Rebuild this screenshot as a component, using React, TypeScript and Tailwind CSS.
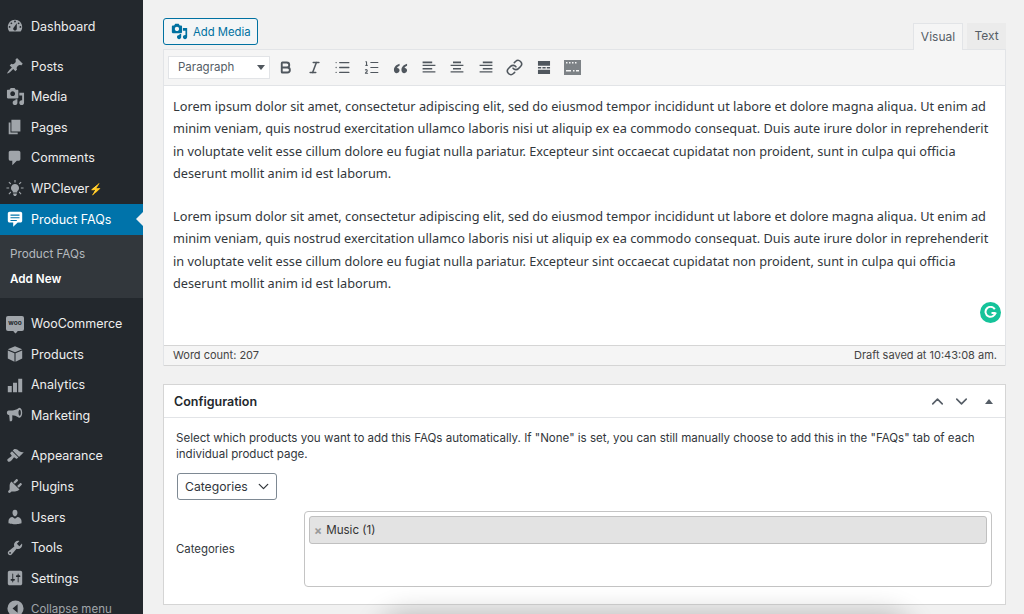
import React from "react";
import { Bold, Italic, List, ListOrdered, Link, ChevronUp, ChevronDown } from "lucide-react";

const P = ({ d, size = 20, className = "" }: { d: string; size?: number; className?: string }) => (
  <svg width={size} height={size} viewBox="0 0 20 20" fill="currentColor" fillRule="evenodd" className={className}>
    <path d={d} />
  </svg>
);

const paths = {
  dashboard: "M3.76 16h12.48c1.1-1.37 1.76-3.11 1.76-5 0-4.42-3.58-8-8-8s-8 3.58-8 8c0 1.89.66 3.63 1.76 5zM10 4c.55 0 1 .45 1 1s-.45 1-1 1-1-.45-1-1 .45-1 1-1zM6 6c.55 0 1 .45 1 1s-.45 1-1 1-1-.45-1-1 .45-1 1-1zm8 0c.55 0 1 .45 1 1s-.45 1-1 1-1-.45-1-1 .45-1 1-1zm-5.37 5.55L12 7v6c0 1.1-.9 2-2 2s-2-.9-2-2c0-.57.24-1.08.63-1.45zM4 10c.55 0 1 .45 1 1s-.45 1-1 1-1-.45-1-1 .45-1 1-1zm12 0c.55 0 1 .45 1 1s-.45 1-1 1-1-.45-1-1 .45-1 1-1z",
  post: "M10.44 3.02l1.82-1.82 6.36 6.35-1.83 1.82c-1.05-.68-2.48-.57-3.41.36l-.75.75c-.92.93-1.04 2.35-.35 3.41l-1.83 1.82-2.41-2.41-2.8 2.79c-.42.42-3.38 2.71-3.8 2.29s1.86-3.39 2.28-3.81l2.79-2.79L4.1 9.36l1.83-1.82c1.05.69 2.48.57 3.4-.36l.75-.75c.93-.92 1.05-2.35.36-3.41z",
  media: "M13 11V4c0-.55-.45-1-1-1h-1.67L9 1H5L3.67 3H2c-.55 0-1 .45-1 1v7c0 .55.45 1 1 1h10c.55 0 1-.45 1-1zM7 4.5c1.38 0 2.5 1.12 2.5 2.5S8.38 9.5 7 9.5 4.5 8.38 4.5 7 5.62 4.5 7 4.5zM14 6h5v10.5c0 1.38-1.12 2.5-2.5 2.5S14 17.88 14 16.5s1.12-2.5 2.5-2.5c.17 0 .34.02.5.05V9h-3V6zm-4 8.05V13h2v3.5c0 1.38-1.12 2.5-2.5 2.5S7 17.88 7 16.5 8.12 14 9.5 14c.17 0 .34.02.5.05z",
  page: "M6 15V2h10v13H6zm-1 1h8v2H3V5h2v11z",
  comments: "M5 2h9c1.1 0 2 .9 2 2v7c0 1.1-.9 2-2 2h-2l-5 5v-5H5c-1.1 0-2-.9-2-2V4c0-1.1.9-2 2-2z",
  faq: "M4 2h12c1.1 0 2 .9 2 2v8c0 1.1-.9 2-2 2h-3l-5 4.500V14H4c-1.1 0-2-.9-2-2V4c0-1.1.9-2 2-2zm1 3v1.300h10V5H5zm0 3v1.300h10V8H5zm0 3v1.300h7V11H5z",
  appearance: "M14.48 11.06L7.41 3.99l1.5-1.5c.5-.56 2.3-.47 3.51.32 1.21.8 1.43 1.28 2.91 2.1 1.18.64 2.45 1.26 4.45.85zm-.71.71L6.7 4.7 4.93 6.47c-.39.39-.39 1.02 0 1.41l1.06 1.06c.39.39.39 1.03 0 1.42-.6.6-1.43 1.11-2.21 1.69-.35.26-.7.53-1.01.84C1.43 13.23.99 14.8 2 15.82c1.02 1.02 2.59.58 3.94-.77.31-.31.58-.66.84-1.01.58-.78 1.09-1.61 1.69-2.21.39-.39 1.03-.39 1.42 0l1.06 1.06c.39.39 1.02.39 1.41 0z",
  plugins: "M13.11 4.36L9.87 7.6 8 5.73l3.24-3.24c.35-.34 1.05-.2 1.56.32.52.51.66 1.21.31 1.55zm-8 1.77l.91-1.12 9.01 9.01-1.19.84c-.71.71-2.63 1.16-3.82 1.16H6.14L4.9 17.26c-.59.59-1.54.59-2.12 0-.59-.58-.59-1.53 0-2.12l1.24-1.24v-3.88c0-1.13.4-3.19 1.09-3.89zm7.26 3.97l3.24-3.24c.34-.35 1.04-.21 1.55.31.52.51.66 1.21.31 1.55l-3.24 3.25z",
  users: "M10 9.25c-2.27 0-2.73-3.44-2.73-3.44C7 4.02 7.82 2 9.97 2c2.16 0 2.98 2.02 2.71 3.81 0 0-.41 3.44-2.68 3.44zm0 2.57L12.72 10c2.39 0 4.52 2.33 4.52 4.53v2.49s-3.65 1.13-7.24 1.13c-3.65 0-7.24-1.13-7.24-1.13v-2.49c0-2.25 1.94-4.48 4.47-4.48z",
  tools: "M16.68 9.77c-1.34 1.34-3.3 1.67-4.95.99l-5.41 6.52c-.99.99-2.59.99-3.58 0s-.99-2.59 0-3.57l6.52-5.42c-.68-1.65-.35-3.61.99-4.95 1.28-1.28 3.12-1.62 4.72-1.06l-2.89 2.89 2.82 2.82 2.86-2.87c.53 1.58.18 3.39-1.08 4.65zM3.81 16.21c.4.39 1.04.39 1.43 0 .4-.4.4-1.04 0-1.43-.39-.4-1.03-.4-1.43 0-.39.39-.39 1.03 0 1.43z",
  settings: "M18 16V4c0-1.1-.9-2-2-2H4c-1.1 0-2 .9-2 2v12c0 1.1.9 2 2 2h12c1.1 0 2-.9 2-2zM8 11h1c.55 0 1 .45 1 1s-.45 1-1 1H8v1.5c0 .28-.22.5-.5.5s-.5-.22-.5-.5V13H6c-.55 0-1-.45-1-1s.45-1 1-1h1V5.5c0-.28.22-.5.5-.5s.5.22.5.5V11zm5-2h-1c-.55 0-1-.45-1-1s.45-1 1-1h1V5.5c0-.28.22-.5.5-.5s.5.22.5.5V7h1c.55 0 1 .45 1 1s-.45 1-1 1h-1v5.5c0 .28-.22.5-.5.5s-.5-.22-.5-.5V9z",
  products: "M10 1.500l8 3.200-8 3.400-8-3.400 8-3.200zM2 6.200l7.400 3.100v9.200L2 15V6.200zm16 0V15l-7.400 3.500V9.300L18 6.200z",
  analytics: "M2 11h4.400v7H2v-7zm5.800-3.500h4.400V18H7.800V7.500zM13.600 3H18v15h-4.400V3z",
  marketing: "M15 2c1.700 0 3 2.500 3 5.500S16.700 13 15 13c-.5 0-1-.2-1.400-.6C11.500 11 9 10.300 7 10.200V15c0 .8-.4 1.500-1 2H4.200L3.500 10H3C1.800 10 1 8.900 1 7.500S1.800 5 3 5h4c2.200 0 4.800-.9 6.800-2.400C14.200 2.200 14.600 2 15 2zm.2 2.200c-.8 0-1.300 1.500-1.300 3.300s.5 3.300 1.300 3.300 1.300-1.500 1.300-3.300-.5-3.300-1.300-3.300z",
  collapse: "M10 .5a9.500 9.500 0 1 1 0 19 9.500 9.500 0 0 1 0-19zM12.500 5L6.500 10l6 5V5z",
  bulb: "M10 5.500a4.500 4.500 0 0 1 2.500 8.200V15h-5v-1.300A4.500 4.500 0 0 1 10 5.500zM8 16h4v1.200L11 19H9l-1-1.800V16zM9.400 1h1.200v3H9.400V1zM3.600 3l2.200 2.100-.8.900-2.200-2.200.8-.8zm12.800 0l.8.800L15 6l-.8-.9L16.400 3zM.5 9.400h3v1.200h-3V9.400zm16 0h3v1.200h-3V9.400zM5 14l.8.900-2.200 2.200-.8-.8L5 14zm10 0l2.200 2.300-.8.800-2.200-2.200.8-.9z",
  alignLeft: "M2 2h12v2H2zM2 6h16v1.500H2zM2 10h12v2H2zM2 14h16v1.500H2z",
  alignCenter: "M5 2h10v2H5zM2 6h16v1.500H2zM5 10h10v2H5zM2 14h16v1.500H2z",
  alignRight: "M6 2h12v2H6zM2 6h16v1.500H2zM6 10h12v2H6zM2 14h16v1.500H2z",
};

type Item = { label: string; icon?: keyof typeof paths; extra?: React.ReactNode };

const Row = ({ label, icon, extra }: Item) => (
  <div className="flex h-[30.6px] shrink-0 items-center text-[#eeeeee]">
    <span className="flex w-[31px] justify-center pr-[1px] text-[#a0a5aa]">
      {icon ? <P d={paths[icon]} size={icon === "media" ? 19 : 18} /> : extra}
    </span>
    <span className="pt-[2px] text-[12.5px]">{label}</span>
    {label === "WPClever" && <span className="pt-[2px] text-[11px] leading-none text-[#f5b800]">⚡</span>}
  </div>
);

const WooIcon = () => (
  <span className="relative flex h-[15px] w-[18px] items-center justify-center rounded-[2px] bg-[#a0a5aa] text-[6.500px] font-bold leading-none text-[#23282d]">
    woo
    <span className="absolute -bottom-[2px] left-[8px] h-[3px] w-[3px] rotate-45 bg-[#a0a5aa]" />
  </span>
);

const ToolBtn = ({ children }: { children: React.ReactNode }) => (
  <span className="flex h-[22px] w-[28.7px] items-center justify-center text-[#50575e]">{children}</span>
);

const para = [
  "Lorem ipsum dolor sit amet, consectetur adipiscing elit, sed do eiusmod tempor incididunt ut labore et dolore magna aliqua. Ut enim ad",
  "minim veniam, quis nostrud exercitation ullamco laboris nisi ut aliquip ex ea commodo consequat. Duis aute irure dolor in reprehenderit",
  "in voluptate velit esse cillum dolore eu fugiat nulla pariatur. Excepteur sint occaecat cupidatat non proident, sunt in culpa qui officia",
  "deserunt mollit anim id est laborum.",
];

const Para = () => (
  <p className="whitespace-nowrap">
    {para.map((l) => (
      <span key={l} className="block">{l}</span>
    ))}
  </p>
);

export default function App() {
  return (
    <div className="relative flex h-[614px] w-[1024px] overflow-hidden bg-[#f1f1f1] font-['Inter','Liberation_Sans',sans-serif]">
      {/* Sidebar */}
      <aside className="flex h-full w-[143px] shrink-0 flex-col overflow-hidden bg-[#23282d] pt-[10.7px]">
        <Row label="Dashboard" icon="dashboard" />
        <div className="h-[9.4px] shrink-0" />
        <Row label="Posts" icon="post" />
        <Row label="Media" icon="media" />
        <Row label="Pages" icon="page" />
        <Row label="Comments" icon="comments" />
        <Row label="WPClever" icon="bulb" />
        <div className="relative flex h-[31px] shrink-0 items-center bg-[#0073aa] text-white">
          <span className="flex w-[31px] justify-center pr-[1px]">
            <P d={paths.faq} size={18} />
          </span>
          <span className="pt-[2px] text-[12.5px]">Product FAQs</span>
          <span className="absolute right-0 top-[8px] h-0 w-0 border-y-[7.5px] border-r-[7.5px] border-y-transparent border-r-[#f1f1f1]" />
        </div>
        <div className="flex h-[63px] shrink-0 flex-col justify-center gap-[7px] bg-[#32373c] pl-[10px] text-[11.7px]">
          <span className="leading-[18px] text-[#b4b9be]">Product FAQs</span>
          <span className="font-semibold leading-[18px] text-white">Add New</span>
        </div>
        <div className="h-[10.5px] shrink-0" />
        <Row label="WooCommerce" extra={<WooIcon />} />
        <Row label="Products" icon="products" />
        <Row label="Analytics" icon="analytics" />
        <Row label="Marketing" icon="marketing" />
        <div className="h-[10px] shrink-0" />
        <Row label="Appearance" icon="appearance" />
        <Row label="Plugins" icon="plugins" />
        <Row label="Users" icon="users" />
        <Row label="Tools" icon="tools" />
        <Row label="Settings" icon="settings" />
        <div className="flex h-[30.6px] shrink-0 items-center text-[#a0a5aa]">
          <span className="flex w-[31px] justify-center pr-[1px]"><P d={paths.collapse} size={17} /></span>
          <span className="pt-[2px] text-[11.5px]">Collapse menu</span>
        </div>
      </aside>

      {/* Main */}
      <main className="flex min-w-0 flex-1 flex-col pl-[20px] pr-[18px] pt-[18px]">
        <div className="flex h-[31px] items-start justify-between">
          <button className="flex h-[27px] w-[95px] items-center gap-[5px] rounded-[3px] border border-[#0071a1] bg-[#f3f5f6] pl-[7px] pt-[2px] text-[11.3px] text-[#0071a1]">
            <P d={paths.media} size={17} className="-mt-[2px]" />
            Add Media
          </button>
          <div className="mt-[5px] flex h-[26px] items-stretch gap-[4px] text-[12px] text-[#555d66]">
            <span className="z-10 -mb-[1px] flex w-[50px] items-center justify-center border border-b-0 border-[#e2e4e7] bg-[#f5f5f5] pb-[1px]">Visual</span>
            <span className="flex w-[39px] items-center justify-center bg-[#ebebeb] pb-[1px]">Text</span>
          </div>
        </div>

        <section className="flex flex-col border-x border-[#e2e4e7]">
          <div className="flex h-[37px] items-center border-y border-[#e2e4e7] bg-[#f5f5f5] pl-[4px]">
            <div className="mr-[1px] flex h-[23px] w-[102px] items-center justify-between border border-[#e2e4e7] bg-white pl-[9px] pr-[4px] text-[11.5px] text-[#555d66]">
              Paragraph
              <span className="h-0 w-0 border-x-[4px] border-t-[5px] border-x-transparent border-t-[#50575e]" />
            </div>
            <ToolBtn><Bold size={15} strokeWidth={3} /></ToolBtn>
            <ToolBtn><Italic size={15} strokeWidth={2.5} /></ToolBtn>
            <ToolBtn><List size={17} strokeWidth={1.8} /></ToolBtn>
            <ToolBtn><ListOrdered size={17} strokeWidth={1.5} /></ToolBtn>
            <ToolBtn>
              <svg width="15" height="12" viewBox="0 0 16 12" fill="currentColor">
                <path d="M7 1.500C3.500 2.500 1 5 1 8c0 2 1.200 3.500 3 3.500S7 10.200 7 8.500 5.800 5.800 4.200 6C4.500 5 5.500 4 7 3.500v-2zM15 1.500c-3.500 1-6 3.500-6 6.500 0 2 1.200 3.500 3 3.500s3-1.300 3-3-1.200-2.700-2.800-2.500c.3-1 1.300-2 2.800-2.500v-2z" />
              </svg>
            </ToolBtn>
            <ToolBtn><P d={paths.alignLeft} size={16} /></ToolBtn>
            <ToolBtn><P d={paths.alignCenter} size={16} /></ToolBtn>
            <ToolBtn><P d={paths.alignRight} size={16} /></ToolBtn>
            <ToolBtn><Link size={17} strokeWidth={2.2} /></ToolBtn>
            <ToolBtn>
              <svg width="14" height="13" viewBox="0 0 15 14" fill="currentColor">
                <path d="M1 0h13v5H1zM1 6.500h3.500V8H1zM5.800 6.500h3.500V8H5.800zM10.500 6.500H14V8h-3.500zM1 9.500h13V14H1z" />
              </svg>
            </ToolBtn>
            <ToolBtn>
              <svg width="17" height="15" viewBox="0 0 17 15" fill="#7d8286" fillRule="evenodd">
                <path d="M0 0h17v15H0zM2 2v1.500h1.500V2zm3 0v1.500h1.500V2zm3 0v1.500h1.500V2zm3 0v1.500h1.500V2zM2 10v1.500h5V10zm7 0v1.500h1.500V10zm3 0v1.500h3V10z" />
              </svg>
            </ToolBtn>
          </div>
          <div className="relative flex h-[259px] flex-col gap-[21px] bg-white pl-[9px] pt-[9px] font-['Noto_Sans',sans-serif] text-[12.74px] leading-[22.3px] text-[#32373c]">
            <Para />
            <Para />
            <span className="absolute bottom-[22px] right-[4px] flex h-[21px] w-[21px] items-center justify-center rounded-full bg-[#15c39a]">
              <svg width="13" height="13" viewBox="0 0 13 13" fill="none" stroke="white" strokeWidth="2">
                <path d="M10.800 3.200A5 5 0 1 0 11.500 6.500v.5H7.500" />
              </svg>
            </span>
          </div>
          <div className="flex h-[21px] items-center justify-between border border-x-0 border-[#d5d5d5] bg-[#f5f5f5] pl-[9px] pr-[8px] text-[11px] text-[#444]">
            <span>Word count: 207</span>
            <span>Draft saved at 10:43:08 am.</span>
          </div>
        </section>

        <section className="mt-[18px] flex h-[221px] flex-col border border-[#d5d5d5] bg-white">
          <div className="flex h-[33px] shrink-0 items-center justify-between border-b border-[#e2e4e7] pl-[10px] pr-[9px] pt-[1px]">
            <h2 className="pt-[1px] text-[12.5px] font-semibold text-[#23282d]">Configuration</h2>
            <div className="flex items-center text-[#555d66]">
              <ChevronUp size={19} strokeWidth={2} />
              <ChevronDown size={19} strokeWidth={2} className="ml-[5px]" />
              <span className="ml-[14px] mr-[3px] h-0 w-0 border-x-[4px] border-b-[5px] border-x-transparent border-b-[#555d66]" />
            </div>
          </div>
          <div className="flex flex-1 flex-col pl-[12px] pr-[13px] pt-[12px] text-[#32373c]">
            <p className="text-[11.55px] leading-[16px]">
              Select which products you want to add this FAQs automatically. If "None" is set, you can still manually choose to add this in the "FAQs" tab of each individual product page.
            </p>
            <div className="ml-[1px] mt-[11px] flex h-[26.5px] w-[100px] items-center justify-between rounded-[3px] border border-[#7e8993] pl-[7px] pr-[4px] pt-[1px] text-[12.2px]">
              Categories
              <ChevronDown size={17} strokeWidth={1.8} />
            </div>
            <div className="mt-[11px] flex items-center">
              <span className="w-[128px] pt-[3px] text-[11.4px] text-[#32373c]">Categories</span>
              <div className="h-[76px] flex-1 rounded-[4px] border border-[#c4c4c4] p-[4px]">
                <div className="flex h-[28px] items-center rounded-[3px] border border-[#c0c0c0] bg-[#e3e3e3] pl-[4px] pt-[3px] text-[11.6px] text-[#333]">
                  <span className="mr-[4px] text-[12px] font-bold leading-none text-[#999]">×</span>
                  <span>Music (1)</span>
                </div>
              </div>
            </div>
          </div>
        </section>
      </main>

      {/* floating shadow coming from below the viewport */}
      <div className="pointer-events-none absolute left-[388px] top-[628px] h-[60px] w-[515px] rounded-[20px] shadow-[0_-4px_26px_12px_rgba(0,0,0,0.22)]" />
    </div>
  );
}
